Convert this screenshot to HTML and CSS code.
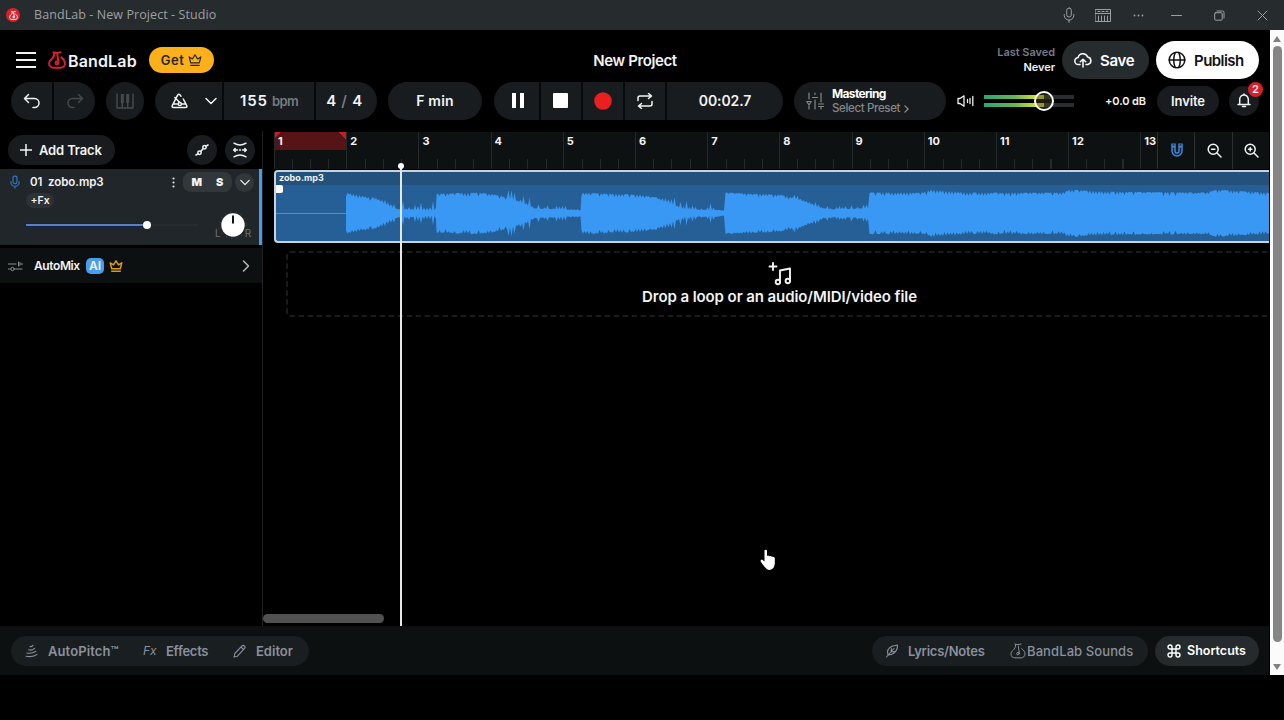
FILE: index.html
```html
<!DOCTYPE html>
<html lang="en">
<head>
<meta charset="utf-8">
<title>BandLab - New Project - Studio</title>
<link rel="stylesheet" href="styles.css">
</head>
<body>
<svg class="defs" width="0" height="0">
  <symbol id="flame" viewBox="0 0 18 18"><path d="M5.500 1.300q3.500 1.300 7 0M6.300 2c.3 2.500-.9 4.300-2.600 5.900C2.300 9.200 1.100 10.500 1.100 12.400c0 2.600 2 4.300 4.400 4.300h7c2.400 0 4.400-1.700 4.400-4.300 0-2.300-1.300-4.200-3.600-6"/><path d="M9.300 3.500l1.300 8.500"/><circle cx="8.900" cy="12" r="1.400"/></symbol>
  <symbol id="crown" viewBox="0 0 14 14"><path d="M2.700 9.800 1.200 3.900l3.300 2L7 1.800l2.500 4.100 3.300-2-1.500 5.900zM2.700 12.300h8.600"/></symbol>
  <symbol id="mic" viewBox="0 0 14 16"><rect x="4.700" y="1" width="4.600" height="9" rx="2.300"/><path d="M2.200 7.500v.8a4.800 4.800 0 0 0 9.600 0v-.8M7 13.200v2.200"/></symbol>
  <symbol id="down" viewBox="0 0 12 8"><path d="M1 1.500l5 5 5-5"/></symbol>
  <symbol id="right" viewBox="0 0 8 12"><path d="M1.500 1l5 5-5 5"/></symbol>
</svg>

<header class="titlebar">
  <span class="app-dot"><svg class="ic" width="9" height="9"><use href="#flame"/></svg></span>
  <span class="window-title">BandLab - New Project - Studio</span>
  <div class="window-tools">
    <svg class="ic" width="14" height="16"><use href="#mic"/></svg>
    <svg class="ic" width="16" height="13" viewBox="0 0 16 13"><rect x=".5" y=".5" width="15" height="12"/><path d="M.5 4.500h15M3.500 7v5M6.500 7v5M9.500 7v5M12.500 7v5M3 2.500h2M7 2.500h2M11 2.500h2"/></svg>
    <svg class="dots-h" width="11" height="3" viewBox="0 0 11 3"><circle cx="1.500" cy="1.500" r=".9"/><circle cx="5.500" cy="1.500" r=".9"/><circle cx="9.500" cy="1.500" r=".9"/></svg>
    <svg class="ic" width="11" height="11" viewBox="0 0 11 11"><path d="M.5 5.500h10"/></svg>
    <svg class="ic" width="11" height="11" viewBox="0 0 11 11"><rect x=".7" y="2.700" width="7.500" height="7.500" rx="1"/><path d="M3 1h5.500q1.500 0 1.500 1.500V8"/></svg>
    <svg class="ic" width="11" height="11" viewBox="0 0 11 11"><path d="M1 1l9 9M10 1l-9 9"/></svg>
  </div>
</header>

<div class="viewport">
<main class="studio">
  <div class="brand-row">
    <svg class="ic burger" width="20" height="16" viewBox="0 0 20 16"><path d="M0 1h20M0 8h20M0 15h20"/></svg>
    <svg class="ic brand-mark" width="18" height="18"><use href="#flame"/></svg>
    <span class="brand-name">BandLab</span>
    <span class="get"><span>Get</span><svg class="ic" width="14" height="14"><use href="#crown"/></svg></span>
    <span class="project">New Project</span>
    <div class="saved"><span class="muted">Last Saved</span><span>Never</span></div>
    <button class="save"><svg class="ic" width="18" height="16" viewBox="0 0 18 16"><path d="M6 12.500H4.500a3.500 3.500 0 0 1-.4-7A5 5 0 0 1 13.600 5a3.800 3.800 0 0 1 .2 7.500H12M9 15V7.500M6.300 9.800 9 7.200l2.700 2.600"/></svg><span>Save</span></button>
    <button class="publish"><svg class="ic" width="18" height="18" viewBox="0 0 18 18"><circle cx="9" cy="9" r="7.800"/><path d="M1.200 9h15.600M7.200 1.500Q4.200 9 7.200 16.500M10.800 1.500q3 7.500 0 15"/></svg><span>Publish</span></button>
  </div>

  <div class="control-row">
    <div class="pill history">
      <span><svg class="ic" width="18" height="16" viewBox="0 0 18 16"><path d="M5.500 1.500 1.500 5.500l4 4M2 5.500h9.500a4.500 4.500 0 0 1 0 9H10"/></svg></span>
      <span class="off"><svg class="ic" width="18" height="16" viewBox="0 0 18 16"><path d="M12.500 1.500l4 4-4 4M16 5.500H6.500a4.500 4.500 0 0 0 0 9H8"/></svg></span>
    </div>
    <div class="pill keys off"><svg class="ic" width="18" height="16" viewBox="0 0 18 16"><path d="M1 1v14h16V1M6.300 10v5M11.700 10v5"/><path class="thick" d="M6.300 1v9M11.700 1v9"/></svg></div>
    <div class="pill tempo">
      <span class="metro"><svg class="ic" width="17" height="16" viewBox="0 0 17 16"><path d="M10 3.200 8.800 1.600Q7.600.6 6.600 2.200L1.300 12.600q-.7 1.900 1.200 1.900h12q1.900 0 1.200-1.900L12.300 6M3 11h3.500M11 11h4M3.800 4.500l5 5"/><circle cx="8.800" cy="11" r="1.600"/></svg><svg class="ic" width="12" height="8"><use href="#down"/></svg></span>
      <span class="bpm"><b>155</b><i>bpm</i></span>
      <span class="sig">4 <i>/</i> 4</span>
    </div>
    <div class="pill key">F min</div>
    <div class="pill transport">
      <span class="pause"><svg width="12" height="15" viewBox="0 0 12 15"><path d="M0 0h4v15H0zM8 0h4v15H8z"/></svg></span>
      <span><svg width="15" height="15" viewBox="0 0 15 15"><rect width="15" height="15" rx="1"/></svg></span>
      <span class="rec"><svg width="18" height="18" viewBox="0 0 18 18"><circle cx="9" cy="9" r="8.800"/></svg></span>
      <span><svg class="ic" width="16" height="16" viewBox="0 0 16 16"><path d="M1 7.500V5q0-2 2-2h11M11.500.5 14.500 3l-3 2.500M15 8.500V11q0 2-2 2H2M4.500 10.500 1.500 13l3 2.500"/></svg></span>
      <span class="clock">00:02.7</span>
    </div>
    <div class="pill mastering">
      <svg class="ic" width="18" height="18" viewBox="0 0 18 18"><path d="M3 1v6M3 14v3M9 1v1.500M9 8v9M15 1v9M15 15v2M.8 9.500h4.400L3 13zM6.500 5.500h5M12.500 12h5M12.500 14.500h5"/></svg>
      <div><b>Mastering</b><span>Select Preset <svg class="ic" width="5" height="8" viewBox="0 0 8 12"><path d="M1.500 1l5 5-5 5"/></svg></span></div>
    </div>
    <svg class="ic speaker" width="17" height="14" viewBox="0 0 17 14"><path d="M1 4.500v5h2L7 12.200V1.800L3 4.500zM10.500 5.500v3M13 4.500v5M15.800 2.500v9"/></svg>
    <div class="meter"><i></i><i></i><b></b></div>
    <span class="db">+0.0 dB</span>
    <div class="invite">Invite</div>
    <div class="bell"><svg class="ic" width="14" height="16" viewBox="0 0 14 16"><path d="M1 11.500h12M2.700 11.500V6.300a4.300 4.300 0 0 1 8.600 0v5.200M5.500 13.500h3M7 1v1"/></svg><em>2</em></div>
  </div>

  <div class="workspace">
    <aside class="tracks">
      <div class="track-tools">
        <div class="add"><svg class="ic" width="12" height="12" viewBox="0 0 12 12"><path d="M6 0v12M0 6h12"/></svg><span>Add Track</span></div>
        <div class="round auto"><svg class="ic" width="14" height="14" viewBox="0 0 14 14"><circle cx="4.500" cy="9.800" r="1.700"/><circle cx="9.500" cy="4.200" r="1.700"/><path d="M5.700 8.500l2.600-3M2.900 10.800 1 12M11.100 3.200 13 2"/></svg></div>
        <div class="round"><svg class="ic" width="16" height="16" viewBox="0 0 16 16"><path d="M2 1.200q6 3.600 12 0M2 14.800q6-3.600 12 0M2.500 8h3M10.500 8h3M3.200 6.500 1.700 8l1.500 1.500M12.800 6.500 14.300 8l-1.500 1.500M8 7.500v1"/></svg></div>
      </div>
      <section class="track">
        <div class="track-head">
          <svg class="ic blue" width="12" height="14" viewBox="0 0 14 16"><use href="#mic"/></svg>
          <span class="track-name">01&nbsp; zobo.mp3</span>
          <svg class="kebab" width="3" height="11" viewBox="0 0 3 11"><circle cx="1.500" cy="1.500" r="1.100"/><circle cx="1.500" cy="5.500" r="1.100"/><circle cx="1.500" cy="9.500" r="1.100"/></svg>
          <span class="ms"><b>M</b><b>S</b></span>
          <span class="fold"><svg class="ic" width="10" height="7"><use href="#down"/></svg></span>
        </div>
        <span class="fx">+Fx</span>
        <div class="track-level">
          <div class="slider"><i></i><b></b></div>
          <div class="pan"><span>L</span><svg width="30" height="30" viewBox="0 0 30 30"><circle class="pan-ticks" cx="15" cy="15" r="13.500"/><circle class="pan-knob" cx="15" cy="15" r="11.700"/><path d="M15 5.500v8"/></svg><span>R</span></div>
        </div>
      </section>
      <section class="automix">
        <svg class="ic" width="15" height="11" viewBox="0 0 15 11"><path d="M0 3h8M13 3h2M0 8h2M7 8h7M10.500 1v4"/><circle cx="4.500" cy="8" r="1.700"/><path d="M12 1.500v3"/></svg>
        <span class="mix-name">AutoMix</span><span class="ai">AI</span>
        <svg class="ic gold" width="14" height="14"><use href="#crown"/></svg>
        <svg class="ic chev" width="8" height="12"><use href="#right"/></svg>
      </section>
    </aside>
    <section class="timeline">
      <div class="ruler">
        <div class="bars" id="bars"></div>
        <div class="zoom-tools">
          <span><svg class="magnet" width="12" height="15" viewBox="0 0 12 15"><path class="m1" d="M2.500.5V8a3.500 3.500 0 0 0 7 0V.5"/><path class="m2" d="M2.500 4.500V8a3.500 3.500 0 0 0 7 0V4.500M2.500 1.200v1.500M9.500 1.200v1.500"/></svg></span>
          <span><svg class="ic" width="15" height="15" viewBox="0 0 15 15"><circle cx="6.200" cy="6.200" r="5"/><path d="M10 10l4 4M4.500 6.200h3.400"/></svg></span>
          <span><svg class="ic" width="15" height="15" viewBox="0 0 15 15"><circle cx="6.200" cy="6.200" r="5"/><path d="M10 10l4 4M4.500 6.200h3.400M6.200 4.500v3.400"/></svg></span>
        </div>
      </div>
      <div class="clip">
        <div class="clip-name">zobo.mp3</div>
        <svg class="wave" width="994" height="57" viewBox="0 0 994 57"><path class="silence" d="M0 28.500h72"/><path id="wave"/></svg>
        <i class="handle"></i>
      </div>
      <div class="drop">
        <svg class="dash" width="982" height="66"><rect x="1" y="1" width="1010" height="64" rx="3"/></svg>
        <svg class="ic note" width="24" height="24" viewBox="0 0 24 24"><path d="M5 1v7M1.500 4.500h7M12 20V8.500L22 6.500V19"/><circle cx="9.900" cy="20" r="2.200"/><circle cx="19.800" cy="19" r="2.200"/></svg>
        <span>Drop a loop or an audio/MIDI/video file</span>
      </div>
      <div class="h-thumb"></div>
      <div class="playhead"></div>
    </section>
  </div>

  <footer class="dock">
    <div class="dock-group left">
      <svg class="ic pitch" width="13" height="14" viewBox="0 0 13 14"><path d="M5 2.500q2 .6 3-1.200M3.500 5.800q3.500 1 6-1.500M1.800 9q5 1 9-1.700M1 12.200q7 1.500 11-1.800"/></svg><b class="t-auto">AutoPitch™</b>
      <i class="fx-mark">Fx</i><b class="t-fx">Effects</b>
      <svg class="ic" width="13" height="14" viewBox="0 0 13 14"><path d="M1 13l.8-3.500L9 1.800q1.200-1 2.400.2t.2 2.400L4.400 12.200zM8 3l2.600 2.600"/></svg><b class="t-ed">Editor</b>
    </div>
    <div class="dock-group right">
      <svg class="ic" width="14" height="14" viewBox="0 0 14 14"><path d="M1.500 13 9 4.500M3 11Q1 5 7 2.200L12.500 1q.2 5-3.500 8-2.500 2.200-6 2M6 8l.5-3.500M6 8l3.500-.5"/></svg><b class="t-lyr">Lyrics/Notes</b>
      <svg class="ic" width="16" height="16"><use href="#flame"/></svg><span class="t-snd">BandLab Sounds</span>
    </div>
    <div class="dock-group keys-btn">
      <svg class="ic" width="14" height="14" viewBox="0 0 14 14"><path d="M5 5h4v4H5zM5 5H3a2 2 0 1 1 2-2zM9 5V3a2 2 0 1 1 2 2zM9 9h2a2 2 0 1 1-2 2zM5 9v2a2 2 0 1 1-2-2z"/></svg><b>Shortcuts</b>
    </div>
  </footer>
</main>
<div class="v-scroll"><i class="up"></i><b></b><i class="dn"></i></div>
</div>

<svg class="pointer" width="16" height="22" viewBox="0 0 16 22"><path d="M4.500 1.300q1.500-1.200 2.500.2V7q1.200-1 2.300.3 1.500-.9 2.500.5 2.200-.6 3 1.200V15q-.4 3-2 4.500-3 2.500-6 .5Q3.500 17 .5 12.200q0-1.700 1.500-1.700l2.500 2z"/></svg>
<script src="timeline.js"></script>
</body>
</html>
```
FILE: styles.css
```css
* { box-sizing: border-box; }
body { margin: 0; height: 720px; overflow: hidden; background: #000; color: #f2f3f4; font: 600 14px/1 Inter, "Liberation Sans", sans-serif; white-space: nowrap; }
svg { flex: none; display: block; }
i { font-style: normal; }
.defs { position: absolute; }
.ic { fill: none; stroke: currentColor; stroke-width: 1.5; stroke-linecap: round; stroke-linejoin: round; }
.off { color: #44494d; }

.titlebar { height: 30px; background: #262b2e; display: flex; align-items: center; padding: 0 16px 0 6px; color: #9da0a3; }
.app-dot { width: 14px; height: 14px; border-radius: 50%; background: #dc1f2b; color: #fff; display: grid; place-items: center; }
.app-dot .ic { stroke-width: 2; }
.window-title { margin-left: 14px; font: 400 12.500px/16px "Open Sans", sans-serif; letter-spacing: .08px; }
.window-tools { margin-left: auto; display: flex; align-items: center; }
.window-tools .ic { stroke-width: 1; }
.window-tools svg + svg { margin-left: 32px; }
.window-tools svg:nth-child(2) { margin-left: 19px; }
.window-tools svg:nth-child(3) { margin-left: 22px; }
.window-tools svg:nth-child(4) { margin-left: 27px; }
.dots-h { fill: currentColor; }

.viewport { display: flex; height: 645px; }
.studio { width: 1269px; display: flex; flex-direction: column; }

.brand-row { height: 50px; padding: 10px 10px 0 16px; display: flex; align-items: center; }
.burger { stroke-width: 2; stroke-linecap: butt; }
.brand-mark { color: #d7202c; stroke-width: 2; margin-left: 12px; }
.brand-name { font-size: 16px; width: 71px; margin-left: 2px; letter-spacing: .15px; padding-top: 1px; }
.get { width: 65px; height: 26px; border-radius: 13px; margin-left: 10px; background: #fbb01c; color: #29251a; display: flex; align-items: center; justify-content: center; gap: 4px; font-size: 13px; letter-spacing: .5px; }
.get .ic { stroke-width: 1.2; }
.project { width: 120px; margin-left: 361px; text-align: center; font-size: 15px; letter-spacing: -.4px; }
.saved { margin-left: auto; display: flex; flex-direction: column; align-items: flex-end; gap: 4px; font-size: 11px; }
.saved span { letter-spacing: -.05px; }
.muted { color: #747b87; }
button { font: inherit; border: 0; height: 38px; border-radius: 19px; display: flex; align-items: center; padding: 0; }
.save { width: 87px; margin-left: 7px; padding-left: 12px; gap: 8px; background: #262b2e; color: #fff; font-size: 15px; letter-spacing: -.3px; }
.publish { width: 103px; margin-left: 7px; padding-left: 12px; gap: 8px; background: #fff; color: #101112; font-size: 15px; letter-spacing: -.55px; }

.control-row { height: 42px; padding: 2px 10px 3px 11px; display: flex; align-items: center; }
.pill { height: 38px; border-radius: 19px; background: #181c1e; display: flex; overflow: hidden; flex: none; align-items: center; justify-content: center; }
.pill > span { height: 100%; display: flex; align-items: center; justify-content: center; }
.pill > span + span { border-left: 2px solid #070809; }
.history { width: 84px; }
.history > span { flex: 1; }
.keys { width: 38px; margin-left: 11px; }
.thick { stroke-width: 3; stroke-linecap: butt; }
.tempo { width: 222px; margin-left: 11px; }
.metro { width: 67px; gap: 17px; padding-left: 11px; }
.bpm { width: 92px; gap: 4px; font-size: 15px; letter-spacing: .9px; }
.bpm b { font-weight: 600; }
.bpm i { font-size: 13px; color: #777b81; letter-spacing: -.6px; padding-top: 2px; }
.sig { flex: 1; font-size: 15px; letter-spacing: .7px; white-space: pre; padding: 0 4px 0 0; }
.sig i { color: #777b81; }
.key { width: 94px; margin-left: 11px; letter-spacing: .2px; }
.transport { width: 289px; margin-left: 12px; fill: #fff; }
.transport > span { width: 42px; }
.transport > span:nth-child(2) { padding-right: 2px; }
.transport > .rec { padding-right: 1px; }
.transport > .pause { width: 45px; padding-left: 3px; }
.rec { fill: #e9201f; }
.transport > .clock { flex: 1; font-size: 14px; letter-spacing: -.1px; padding-top: 1px; }
.mastering { width: 152px; margin-left: 11px; justify-content: flex-start; padding-left: 12px; gap: 8px; font-size: 12px; color: #84888c; }
.mastering .ic { stroke-width: 1.2; }
.mastering > div { display: flex; flex-direction: column; gap: 3px; padding-top: 2px; }
.mastering b { color: #fff; font-weight: 700; letter-spacing: -.65px; }
.mastering div span { font-weight: 500; letter-spacing: -.35px; display: flex; align-items: center; gap: 4px; font-size: 11.500px; }
.mastering div .ic { stroke-width: 2.2; }
.speaker { margin-left: 11px; stroke-width: 1.3; }
.meter { width: 90px; margin-left: 10px; position: relative; display: grid; gap: 4px; }
.meter i { height: 4px; background: linear-gradient(90deg, #2fa477 0, #63b554 30px, #c6db34 50px, #d9dc30 60px, #2b2e30 60px); }
.meter b { position: absolute; left: 50px; top: -4px; width: 20px; height: 20px; border: 2px solid #fff; border-radius: 50%; background: rgba(70, 65, 30, .45); }
.db { margin-left: 31px; width: 42px; font-size: 11px; letter-spacing: -.1px; padding-top: 1px; }
.invite { margin-left: 10px; width: 62px; height: 30px; border-radius: 15px; background: #181c1e; display: grid; place-items: center; font-size: 13px; letter-spacing: -.1px; padding-top: 1px; }
.bell { margin-left: auto; width: 30px; height: 30px; border-radius: 50%; background: #181c1e; display: grid; place-items: center; position: relative; }
.bell em { position: absolute; left: 19px; top: -4px; width: 15px; height: 15px; border-radius: 50%; background: #d8202b; font: 600 11px/15px Inter, sans-serif; text-align: center; }

.workspace { height: 504px; display: flex; }
.tracks { width: 263px; border-right: 1px solid #202325; margin-top: 9px; flex: none; }
.track-tools { height: 38px; display: flex; align-items: center; padding: 0 7px 0 8px; }
.add { width: 107px; height: 30px; border-radius: 15px; background: #181c1e; display: flex; align-items: center; padding-left: 12px; gap: 7px; font-size: 13px; letter-spacing: -.15px; }
.round { width: 30px; height: 30px; border-radius: 50%; background: #181c1e; display: grid; place-items: center; margin-left: 8px; }
.auto { margin-left: auto; }
.track { height: 76px; width: 262px; background: #202629; border-right: 3px solid #489de8; padding-top: 3px; }
.track-head { display: flex; align-items: center; height: 20px; padding-left: 9px; }
.blue { color: #2f72bb; }
.track-name { width: 142px; margin-left: 9px; font-size: 11.500px; letter-spacing: -.05px; padding-top: 1px; }
.kebab { fill: #dfe1e2; margin-right: 8px; }
.ms { width: 49px; height: 20px; border-radius: 8px; background: #323739; display: flex; justify-content: center; gap: 14px; align-items: center; font-size: 11px; }
.fold { width: 19px; height: 19px; border-radius: 50%; background: #323739; display: grid; place-items: center; margin-left: 3px; }
.fx { display: block; width: 28px; height: 15px; margin-left: 26px; border-radius: 8px; background: #2c3235; font-size: 10.500px; line-height: 15px; text-align: center; margin-top: 1px; }
.track-level { display: flex; height: 34px; align-items: center; padding-left: 26px; }
.slider { width: 172px; height: 2px; background: #262c2f; position: relative; }
.slider i { display: block; width: 122px; height: 2px; background: #5d80bd; box-shadow: 0 0 0 1px #0d2450; }
.slider b { position: absolute; left: 117px; top: -3px; width: 8px; height: 8px; border-radius: 50%; background: #fff; }
.pan { margin-left: 17px; display: flex; align-items: flex-end; font: 400 10px/13px Inter, sans-serif; color: #6c7275; }
.pan svg { margin: 0 -3px; }
.pan path { stroke: #111; stroke-width: 2; }
.pan-ticks { fill: none; stroke: #3a4043; stroke-width: 1.500; stroke-dasharray: 1 4.500; }
.pan-knob { fill: #fff; }
.automix { margin-top: 3px; height: 35px; width: 262px; background: #0d1011; display: flex; align-items: center; padding: 1px 12px 0 8px; }
.automix > .ic:first-child { stroke-width: 1; color: #8a8e90; }
.mix-name { width: 52px; margin-left: 11px; font-size: 12px; letter-spacing: -.4px; }
.ai { width: 18px; height: 16px; border-radius: 5px; background: #4a9cec; text-align: center; font-size: 12px; line-height: 16px; }
.gold { color: #d79a20; margin-left: 5px; }
.automix .chev { margin-left: auto; color: #b7babc; }

.timeline { width: 1006px; padding: 10px 0 0 11px; position: relative; }
.ruler { height: 37px; display: flex; background: #0e1112; }
.bars { width: 883px; display: flex; overflow: hidden; flex: none; }
.bar { width: 72.200px; flex: none; height: 37px; border-left: 1px solid #25292a; padding: 3px 0 0 3px; font: 700 11px/12px Inter, sans-serif; letter-spacing: .1px; background: linear-gradient(90deg, transparent 17.500px, #25292a 17.500px 18.500px, transparent 18.500px 35.500px, #25292a 35.500px 36.500px, transparent 36.500px 53.500px, #25292a 53.500px 54.500px, transparent 54.500px) 0 27px / 100% 10px no-repeat; }
.bar.loop { background-image: linear-gradient(135deg, #c91d24 4px, transparent 4.500px), linear-gradient(225deg, #c91d24 5px, transparent 5.500px), linear-gradient(#571416, #571416), linear-gradient(90deg, transparent 17px, #25292a 17px 18px, transparent 18px 35px, #25292a 35px 36px, transparent 36px 53px, #25292a 53px 54px, transparent 54px); background-position: 0 0, 0 0, 0 0, 0 27px; background-size: 100% 18px, 100% 18px, 100% 18px, 100% 10px; background-repeat: no-repeat; }
.zoom-tools { flex: 1; display: flex; }
.zoom-tools span { flex: 1; height: 37px; display: grid; place-items: center; border-left: 1px solid #2c3032; padding-left: 2px; }
.magnet path { fill: none; }
.m1 { stroke: #4288d0; stroke-width: 4.500; }
.m2 { stroke: #0d2746; stroke-width: 1.600; }
.clip { margin-top: 1px; height: 73px; border: 2px solid #c3d3e2; border-right: 0; border-radius: 4px 0 0 4px; background: #265f95; position: relative; overflow: hidden; }
.clip-name { height: 13px; padding-left: 3px; background: #23517c; font: 700 9px/12px Inter, sans-serif; letter-spacing: .05px; }
.wave { fill: #3998f4; }
.silence { stroke: #4d91cf; }
.handle { position: absolute; left: -1px; top: 13px; width: 8px; height: 8px; border-radius: 2px; background: #fff; }
.drop { margin: 8px 0 0 12px; height: 66px; display: flex; flex-direction: column; align-items: center; padding: 11px 0 0 4px; gap: 3px; position: relative; font-size: 15px; letter-spacing: -.08px; }
.drop .note { stroke-width: 1.9; }
.dash { position: absolute; left: 0; top: 0; fill: none; stroke: #232626; stroke-width: 1.500; stroke-dasharray: 5.500 3.500; }
.h-thumb { position: absolute; left: 0; top: 492px; width: 121px; height: 9px; border-radius: 5px; background: #515151; }
.playhead { position: absolute; left: 137px; top: 44px; width: 2px; height: 460px; background: #e5e7e9; }
.playhead::before { content: ""; position: absolute; left: -2px; top: -3px; width: 6px; height: 6px; border-radius: 50%; background: #fff; }

.dock { height: 49px; background: #0c1011; display: flex; align-items: center; padding: 0 10px 0 11px; color: #8a909d; font-size: 13px; }
.dock b { font-weight: 600; padding-top: 1px; }
.dock-group { height: 30px; border-radius: 15px; background: #191e20; display: flex; align-items: center; }
.dock .ic { stroke-width: 1.1; }
.left { width: 298px; padding-left: 14px; }
.t-auto { width: 95px; margin-left: 10px; letter-spacing: .1px; }
.fx-mark { width: 16px; font: italic 400 12px/1 Inter, sans-serif; }
.t-fx { width: 67px; margin-left: 7px; letter-spacing: -.25px; }
.t-ed { margin-left: 10px; }
.right { width: 276px; margin-left: auto; padding-left: 13px; }
.t-lyr { width: 102px; margin-left: 9px; letter-spacing: -.25px; }
.t-snd { font-weight: 500; margin-left: 1px; padding-top: 1px; letter-spacing: .1px; }
.dock .keys-btn { width: 104px; margin-left: 7px; padding-left: 12px; gap: 6px; background: #252a2d; color: #fff; font-size: 12.500px; }
.keys-btn .ic { stroke-width: 1.4; }

.v-scroll { width: 14px; background: #fbfbfb; padding: 6px 3px 5px; margin-left: auto; display: flex; flex-direction: column; align-items: center; }
.v-scroll b { width: 9px; height: 596px; border-radius: 5px; background: #858585; margin-top: 4px; }
.up, .dn { border: 4px solid transparent; }
.up { border-top: 0; border-bottom: 6px solid #808080; }
.dn { border-bottom: 0; border-top: 6px solid #808080; margin-top: auto; }
.pointer { position: absolute; left: 760px; top: 549px; fill: #fff; }
```
FILE: timeline.js
```javascript
// Bar numbers along the ruler
const bars = document.getElementById('bars');
for (let n = 1; n <= 13; n++) {
  const bar = document.createElement('div');
  bar.className = n === 1 ? 'bar loop' : 'bar';
  bar.textContent = n;
  bars.appendChild(bar);
}

// Waveform segments: each is a list of [x, amplitude] points with a sharp attack at its start
const segments = [
  [[70, 20], [85, 17], [100, 14], [112, 8], [121, 4], [160, 3]],
  [[160.5, 19], [205, 20], [225, 17], [245, 11], [258, 5], [305, 3]],
  [[305.5, 20], [362, 18], [380, 15], [396, 9], [408, 4], [449, 3]],
  [[449.5, 20], [505, 18], [525, 13], [542, 6], [555, 4], [593, 5]],
  [[593.5, 20], [648, 20], [654, 23], [690, 20], [786, 20], [793, 23], [830, 21], [930, 20], [940, 23], [994, 20]]
];
let seed = 7;
const rnd = () => (seed = (seed * 16807) % 2147483647) / 2147483647;
const upper = [], lower = [];
for (const points of segments) {
  const end = points[points.length - 1][0];
  let k = 0, peak = false;
  for (let x = points[0][0]; x <= end; x += 1.5) {
    while (k < points.length - 2 && x >= points[k + 1][0]) k++;
    const [x0, a0] = points[k], [x1, a1] = points[k + 1];
    const base = a0 + (a1 - a0) * (x - x0) / (x1 - x0);
    peak = !peak;
    // Quiet stretches show tall transients, loud ones shallow notches
    const tall = rnd() > 0.85 ? 5 : 0;
    const a = base < 15 ? base + (peak ? rnd() * 4.5 + tall : 0) : base + 1 - (peak ? rnd() * 4 : 0);
    upper.push(`${x} ${(28.5 - a).toFixed(1)}`);
    lower.unshift(`${x} ${(28.5 + a - rnd()).toFixed(1)}`);
  }
}
document.getElementById('wave').setAttribute('d', 'M' + upper.concat(lower).join('L') + 'Z');
```
